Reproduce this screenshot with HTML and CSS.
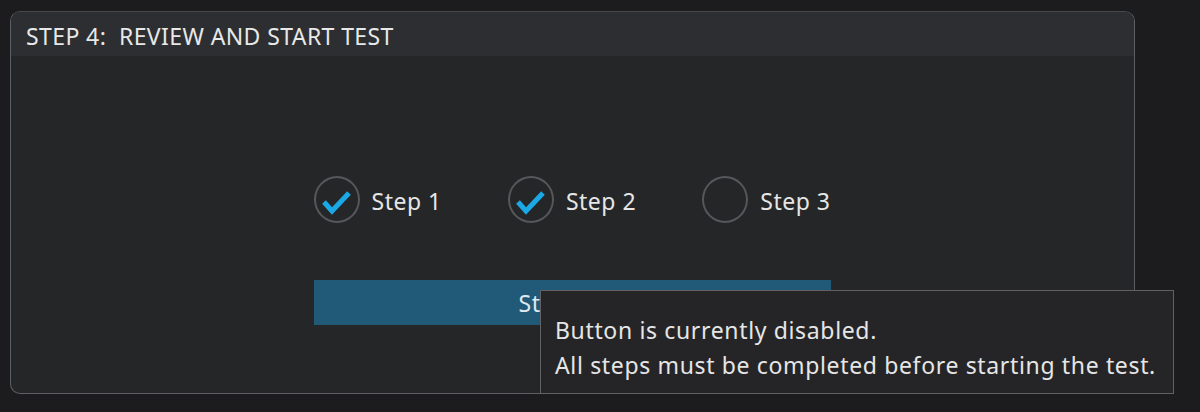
FILE: index.html
```html
<!DOCTYPE html>
<html lang="en">
<head>
<meta charset="utf-8">
<title>Step 4</title>
<link rel="stylesheet" href="styles.css">
</head>
<body>
<section class="panel">
  <header class="panel-header">STEP 4:&nbsp; REVIEW AND START TEST</header>
  <div class="panel-body">
    <div class="content">
      <div class="steps">
        <div class="step">
          <span class="check">
            <svg viewBox="0 0 46 47" width="46" height="47"><path d="M10 26 L18 35 L35 17" fill="none" stroke="#1aa9e6" stroke-width="5" stroke-linejoin="miter" stroke-linecap="butt"/></svg>
          </span>
          <span class="label">Step 1</span>
        </div>
        <div class="step">
          <span class="check">
            <svg viewBox="0 0 46 47" width="46" height="47"><path d="M10 26 L18 35 L35 17" fill="none" stroke="#1aa9e6" stroke-width="5" stroke-linejoin="miter" stroke-linecap="butt"/></svg>
          </span>
          <span class="label">Step 2</span>
        </div>
        <div class="step">
          <span class="check"></span>
          <span class="label">Step 3</span>
        </div>
      </div>
      <button class="start" disabled>Start Test</button>
    </div>
  </div>
</section>
<div class="tooltip">
  <div>Button is currently disabled.</div>
  <div>All steps must be completed before starting the test.</div>
</div>
</body>
</html>
```

FILE: styles.css
```css
html, body {
  margin: 0;
  padding: 0;
  background: #1c1c1e;
  height: 100%;
}
body {
  font-family: "Noto Sans", "Open Sans", sans-serif;
  color: #e4e4e4;
  padding: 11px 0 0 10px;
  box-sizing: border-box;
  overflow: hidden;
}
.panel {
  width: 1125px;
  height: 383px;
  box-sizing: border-box;
  border: 1px solid #5e5f62;
  border-top-color: #47484b;
  border-radius: 10px;
  background: #252628;
  overflow: hidden;
  display: flex;
  flex-direction: column;
}
.panel-header {
  height: 40px;
  padding-top: 4px;
  background: #2d2e31;
  font-size: 23px;
  letter-spacing: 0.4px;
  line-height: 40px;
  padding-left: 15px;
  color: #e8e8e8;
  white-space: pre;
}
.panel-body {
  flex: 1;
  display: flex;
  justify-content: center;
  padding-top: 119px;
}
.content {
  width: 517px;
  display: flex;
  flex-direction: column;
  margin-left: -1px;
}
.steps {
  display: flex;
  justify-content: space-between;
  align-items: center;
  height: 48px;
}
.step {
  display: flex;
  align-items: center;
  gap: 12px;
}
.check {
  width: 46px;
  height: 47px;
  box-sizing: border-box;
  border: 2px solid #56575a;
  border-radius: 50%;
  display: flex;
  align-items: center;
  justify-content: center;
}
.check svg {
  display: block;
  flex: none;
}
.label {
  font-size: 23px;
  letter-spacing: 0.5px;
  color: #e6e6e6;
  line-height: 30px;
  padding-top: 4px;
}
.start {
  margin-top: 57px;
  height: 45px;
  width: 517px;
  border: none;
  background: #215979;
  color: #dfe8ee;
  font-family: inherit;
  font-size: 23px;
  letter-spacing: 0.6px;
  padding: 0;
}
.tooltip {
  position: absolute;
  left: 540px;
  top: 290px;
  width: 634px;
  height: 104px;
  box-sizing: border-box;
  background: #252527;
  border: 1px solid #616164;
  padding: 22px 0 0 14px;
  font-size: 23px;
  letter-spacing: 0.65px;
  line-height: 35px;
  color: #e6e6e6;
  white-space: nowrap;
}
```
